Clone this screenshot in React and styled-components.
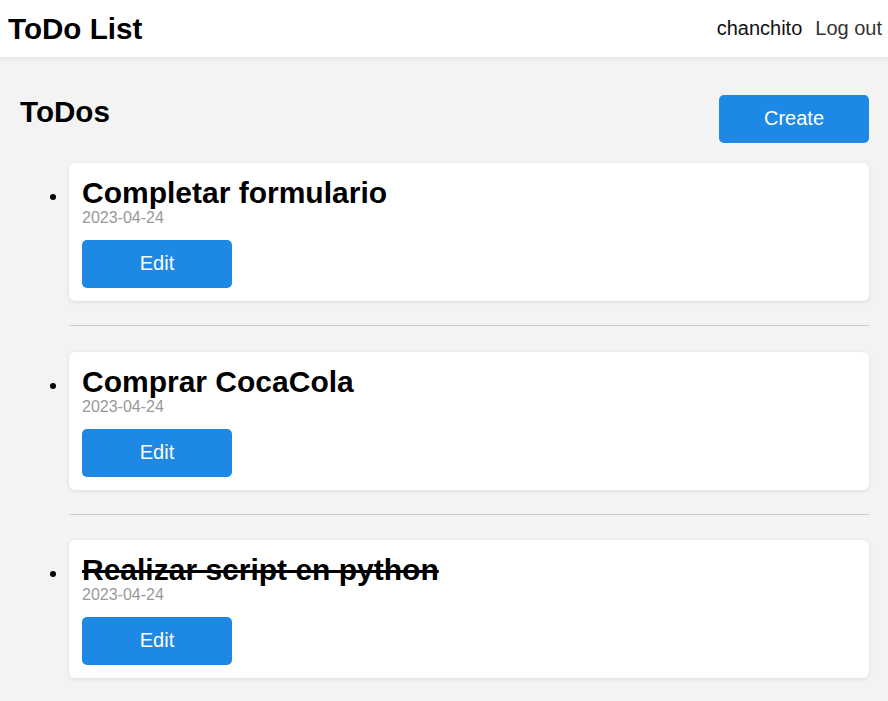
import React from 'react';
import styled, { createGlobalStyle } from 'styled-components';

const todos = [
    { id: 1, title: 'Completar formulario', date: '2023-04-24', done: false },
    { id: 2, title: 'Comprar CocaCola', date: '2023-04-24', done: false },
    { id: 3, title: 'Realizar script en python', date: '2023-04-24', done: true },
];

const App = () => {
    return (
        <>
            <GlobalStyle />
            <Header>
                <Brand>ToDo List</Brand>
                <Nav>
                    <span className='user'>chanchito</span>
                    <a href='#logout'>Log out</a>
                </Nav>
            </Header>
            <Main>
                <TopRow>
                    <Title>ToDos</Title>
                    <Button>Create</Button>
                </TopRow>
                <List>
                    {todos.map((todo) => (
                        <li key={todo.id}>
                            <Card>
                                <TodoTitle $done={todo.done}>{todo.title}</TodoTitle>
                                <DateText>{todo.date}</DateText>
                                <Button>Edit</Button>
                            </Card>
                            <Divider />
                        </li>
                    ))}
                </List>
            </Main>
        </>
    );
}

export default App;

const GlobalStyle = createGlobalStyle`
    html, body {
        margin: 0;
        padding: 0;
        background: #f3f3f3;
        font-family: "Liberation Sans", Arial, sans-serif;
        color: #000;
    }
`;

const Header = styled.header`
    display: flex;
    align-items: center;
    justify-content: space-between;
    height: 57px;
    padding: 0 6px 0 8px;
    background: #fff;
    box-shadow: 0 2px 5px rgba(0, 0, 0, 0.07);
    position: relative;
`;

const Brand = styled.h1`
    margin: 0;
    font-size: 29.6px;
    font-weight: 700;
`;

const Nav = styled.nav`
    display: flex;
    align-items: center;
    gap: 13px;
    font-size: 20px;

    .user {
        color: #111;
    }

    a {
        color: #333;
        text-decoration: none;
    }
`;

const Main = styled.main`
    padding: 38px 19px 0 20px;
`;

const TopRow = styled.div`
    display: flex;
    align-items: flex-start;
    justify-content: space-between;
`;

const Title = styled.h2`
    margin: 0;
    font-size: 29.6px;
    font-weight: 700;
`;

const Button = styled.button`
    width: 150px;
    height: 48px;
    padding: 0 0 1px;
    border: none;
    border-radius: 5px;
    background: #1e88e5;
    color: #fff;
    font-family: "Liberation Sans", Arial, sans-serif;
    font-size: 20px;
    cursor: pointer;
`;

const List = styled.ul`
    margin: 20px 0 0;
    padding-left: 49px;

    li {
        font-size: 20px;
    }
`;

const Card = styled.div`
    background: #fff;
    border-radius: 6px;
    padding: 13px;
    box-shadow: 0 1px 4px rgba(0, 0, 0, 0.1);
`;

const TodoTitle = styled.h3`
    margin: 0;
    font-size: 30px;
    line-height: 33px;
    font-weight: 700;
    text-decoration: ${({ $done }) => ($done ? 'line-through' : 'none')};
`;

const DateText = styled.p`
    margin: 0 0 13px;
    font-size: 16px;
    color: #999;
`;

const Divider = styled.hr`
    margin: 24px 0 25.5px;
    border: none;
    border-top: 1px solid #ccc;
`;
